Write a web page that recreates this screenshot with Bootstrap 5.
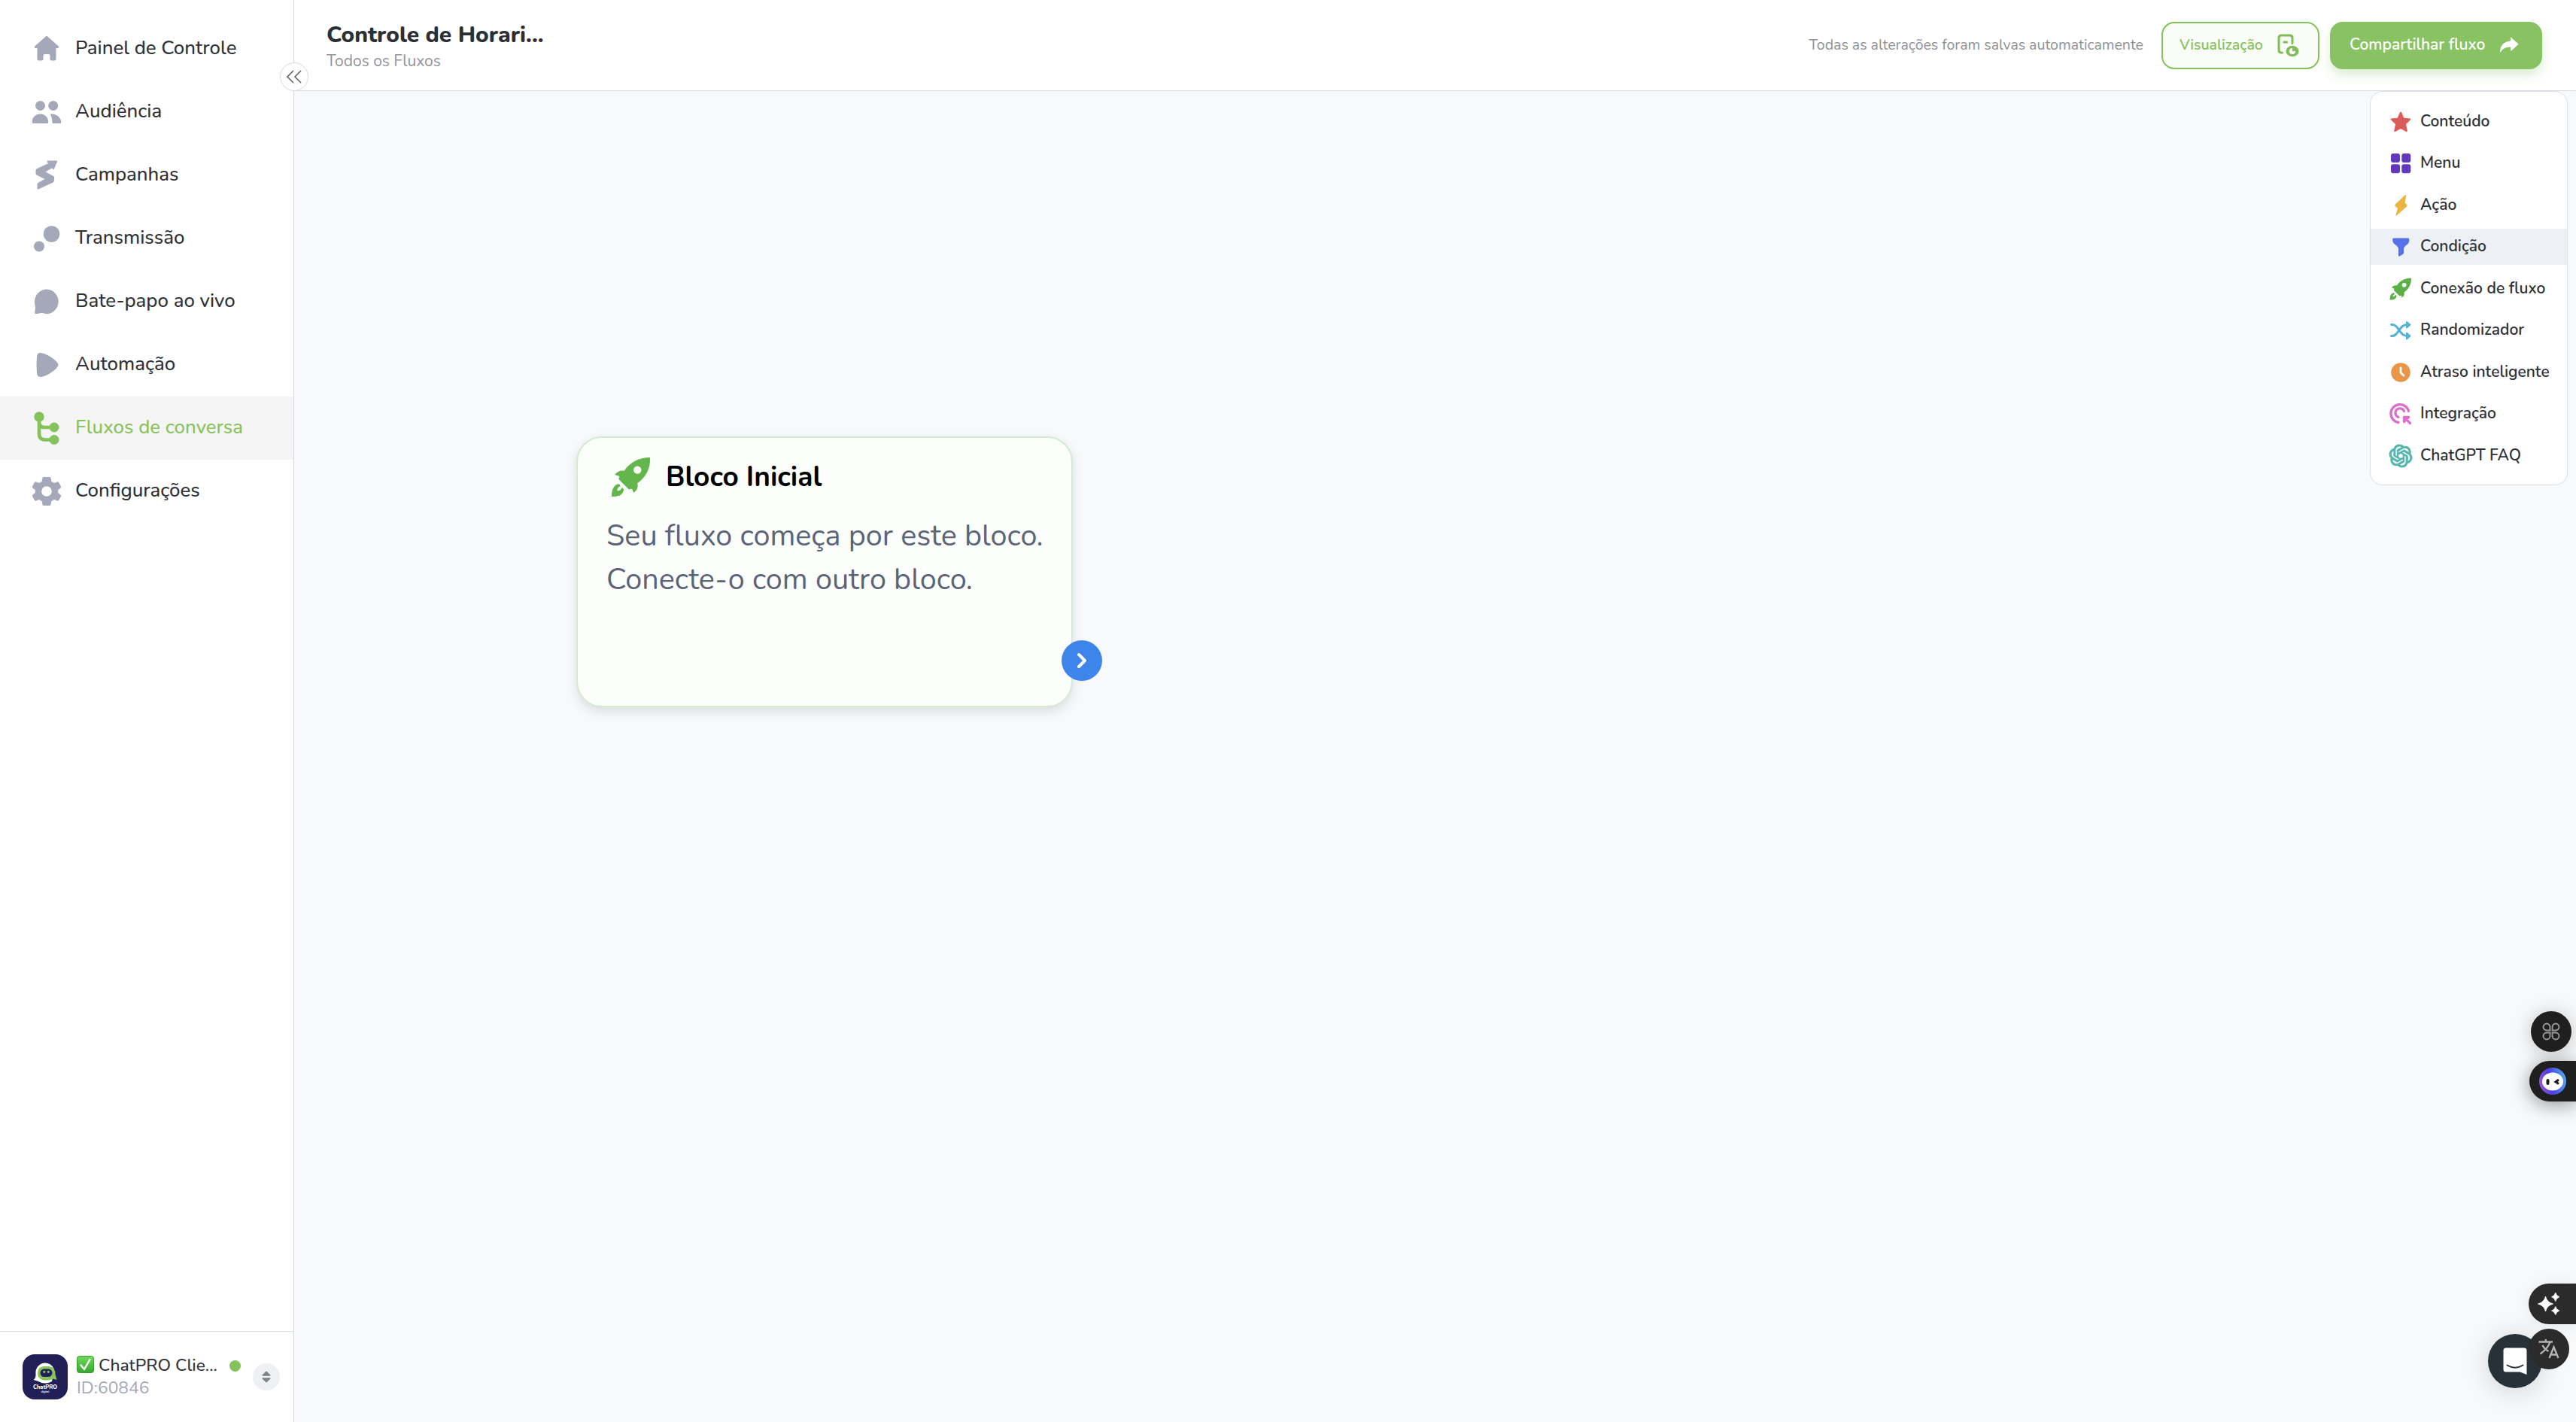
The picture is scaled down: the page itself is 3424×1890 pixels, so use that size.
<!DOCTYPE html>
<html lang="pt-BR">
<head>
<meta charset="utf-8">
<title>Controle de Horarios - Fluxos de conversa</title>
<link href="https://cdn.jsdelivr.net/npm/bootstrap@5.3.0/dist/css/bootstrap.min.css" rel="stylesheet">
<style>
  body { font-family: Nunito, "Noto Sans", sans-serif; color: #2b2f36; background: #fff; }
  .app-shell { width: 3424px; height: 1890px; overflow: hidden; }
  svg { display: block; flex: none; }

  /* sidebar */
  .side-bar { width: 391px; border-right: 1px solid #d7dae1; background: #fff; z-index: 2; }
  .side-menu { padding-top: 23px; }
  .side-link { height: 84px; padding: 0 0 2px 44px; gap: 20px; font-size: 25.8px; font-weight: 500; color: #2f3237; text-decoration: none; white-space: nowrap; }
  .side-link svg { width: 36px; height: 44px; fill: #a4a8b8; position: relative; top: 1px; }
  .side-link.active { background: #f5f5f5; color: #88c360; }
  .side-link.active svg { fill: #84c25b; }
  .collapse-btn { width: 38px; height: 38px; left: 372px; top: 83px; border: 1px solid #d9dade; background: #fff; z-index: 5; }
  .account-bar { height: 121px; border-top: 1px solid #d9dce3; padding: 0 17px 0 30px; }
  .account-logo { width: 60px; height: 60px; }
  .account-text { margin-left: 12px; width: 186px; }
  .account-name { font-size: 22.8px; font-weight: 500; line-height: 30px; white-space: nowrap; color: #2f3237; }
  .account-id { font-size: 22.8px; line-height: 30px; color: #a4a8b8; }
  .online-dot { width: 15px; height: 15px; background: #84c25b; margin-left: 17px; margin-top: -29px; }
  .switch-btn { width: 36px; height: 36px; background: #eef0f3; margin-left: 16px; }

  /* top bar */
  .top-bar { height: 121px; border-bottom: 1px solid #d9dce0; padding: 0 45px 0 43px; background: #fff; }
  .flow-title { font-size: 30px; font-weight: 800; line-height: 40px; color: #2b2f36; margin-top: 2px; white-space: nowrap; }
  .flow-sub { font-size: 21px; line-height: 28px; font-weight: 400; color: #929499; }
  .save-note { font-size: 19.5px; color: #8f9297; margin-right: 24px; white-space: nowrap; }
  .btn-flow { height: 63px; border-radius: 17px; padding: 0 22px; border-width: 2px; white-space: nowrap; }
  .btn-preview { width: 210px; color: #88c360; border-color: #84c25b; background: #f9fcf7; font-size: 19.5px; font-weight: 600; margin-right: 14px; padding-right: 24px; }
  .btn-share { width: 282px; color: #fff; background: #88c263; border-color: #88c263; font-size: 21px; font-weight: 600; padding: 0 24px; box-shadow: 0 8px 14px rgba(136,194,99,.28); }

  /* canvas */
  .flow-canvas { background: #f7f9fb; }
  .block-palette { width: 263px; height: 524px; left: 2759px; top: 0; border: 1px solid #dadfe3; border-radius: 17px; background: #fff; padding-top: 15.5px; gap: 7.5px; }
  .palette-item { height: 48px; padding: 0 0 0 25px; gap: 11px; font-size: 21px; font-weight: 600; color: #2f3237; white-space: nowrap; }
  .palette-item svg { width: 30px; height: 30px; }
  .palette-item.active { background: #edf1f5; }
  .start-node { width: 660px; height: 360px; left: 375px; top: 459px; border: 2px solid #d6e9d3; border-radius: 34px; background: #fcfefb; padding: 24px 38px; box-shadow: 0 6px 14px rgba(60,70,80,.14); }
  .node-title { font-size: 37px; font-weight: 700; color: #000; line-height: 56px; }
  .node-text { font-size: 39.6px; line-height: 58px; color: #5d6478; white-space: nowrap; margin-top: 21px; }
  .node-port { width: 54px; height: 54px; left: 643px; top: 269px; background: #3d85ea; }

  /* floating helpers */
  .helper { color: #fff; background: #1f1f20; }
  .h-round { width: 54px; height: 54px; }
  .h-pill { height: 54px; border-radius: 27px 0 0 27px; }
  .h-shortcut { left: 3364px; top: 1344px; box-shadow: 0 2px 26px rgba(0,0,0,.22); }
  .h-bot { left: 3362px; top: 1410px; width: 62px; padding-left: 13px; box-shadow: 0 4px 26px rgba(0,0,0,.42); }
  .h-spark { left: 3361px; top: 1706px; width: 63px; background: #2b2b2b; padding-left: 12px; box-shadow: 0 2px 22px rgba(0,0,0,.08); }
  .h-chat { left: 3307px; top: 1773px; width: 72px; height: 72px; background: #283038; box-shadow: 0 4px 36px rgba(0,0,0,.16); }
  .h-translate { left: 3361px; top: 1766px; background: #2b2b2b; }
</style>
</head>
<body>
<svg width="0" height="0" class="position-absolute">
  <symbol id="rocket" viewBox="0 0 52 52">
    <path fill-rule="evenodd" d="M50 1C36 1 25 7 17 18C12 17 8 19 5 23L11 25L10 29L23 42L27 41L29 46C34 43 35 39 34 34C45 26 51 15 50 1ZM34 12a5 5 0 1 1 0 10a5 5 0 0 1 0-10Z"/>
    <path d="M9 35C3 37 1 43 1 51C9 51 14 50 16 44C17 42 16 40 14 40C12 44 9 44 8 43C8 40 10 39 12 38C12 36 11 35 9 35Z"/>
  </symbol>
</svg>

<div class="app-shell d-flex position-relative">
  <aside class="side-bar d-flex flex-column flex-shrink-0">
    <nav class="side-menu d-flex flex-column flex-grow-1">
      <a class="side-link d-flex align-items-center"><svg viewBox="0 0 36 44"><path d="M16.2 5.9Q18 4.300 19.800 5.900L33.800 18.600Q35 20.500 33 20.900H30.500V35.500Q30.500 37.500 28.500 37.500H24.500Q22.500 37.500 22.500 35.500V31Q22.500 29 20.500 29H15.500Q13.500 29 13.500 31V35.500Q13.500 37.500 11.500 37.500H7.500Q5.500 37.500 5.500 35.500V20.900H3Q1 20.500 2.200 18.600Z"/></svg><span>Painel de Controle</span></a>
      <a class="side-link d-flex align-items-center"><svg viewBox="0 0 40 44" style="width:40px;margin:0 -2px"><circle cx="11.500" cy="13.500" r="6.500"/><circle cx="28.700" cy="13.500" r="6.500"/><path d="M.8 35.500C.8 28.500 5.500 24.500 11.500 24.500S22.200 28.500 22.200 35.500Q22.200 37 20.500 37H2.500Q.8 37 .8 35.500ZM24.800 24.500C33 23.500 39.300 29 39.300 35.500Q39.300 37 37.500 37H29Q27.500 37 27.400 35.500C27.300 31 26.500 28 24.800 24.500Z"/></svg><span>Audiência</span></a>
      <a class="side-link d-flex align-items-center"><svg viewBox="0 0 36 44"><path d="M19 2.500H31Q32.500 2.500 32 4L27.500 14.500L25 12.500L19.500 15.500L16.500 17.500L27 23Q28 23.700 28 25V28.500Q28 30.500 26.500 31.500L7 40.500Q5.500 40.800 5.500 39.500V34Q5.500 32.500 7 31.700L15.500 27L5 21.700Q3.500 21 3.500 19.500V15.500Q3.500 14 5 13.300L20.500 6L18.500 4.500Z"/></svg><span>Campanhas</span></a>
      <a class="side-link d-flex align-items-center"><svg viewBox="0 0 36 44"><circle cx="24.500" cy="16" r="10.800"/><circle cx="8" cy="32.500" r="7"/></svg><span>Transmissão</span></a>
      <a class="side-link d-flex align-items-center"><svg viewBox="0 0 36 44"><path d="M18.500 5.500A16.400 16.400 0 0 1 18.500 38.200Q15 38.200 12 36.800Q9 37.800 4 38.200Q2 38.200 2.200 36Q2.800 33 3 29.500Q2 26 2 22A16.400 16.400 0 0 1 18.500 5.500Z"/></svg><span>Bate-papo ao vivo</span></a>
      <a class="side-link d-flex align-items-center"><svg viewBox="0 0 36 44"><path d="M5 11Q5.500 5.500 10.500 6Q15 6.500 22 10.500Q33 17.500 33.600 22Q33 26.500 22 33.500Q15 37.500 10.500 38Q5.500 38.500 5 33Q4 22 5 11Z"/></svg><span>Automação</span></a>
      <a class="side-link active d-flex align-items-center"><svg viewBox="0 0 36 44"><circle cx="8" cy="7" r="6.700"/><circle cx="28" cy="21" r="6.500"/><circle cx="28" cy="37.500" r="6.500"/><path d="M8 8V29Q8 37.500 16 37.500H28M8 15Q9 21 15 21H28" fill="none" stroke="#84c25b" stroke-width="4.600"/></svg><span>Fluxos de conversa</span></a>
      <a class="side-link d-flex align-items-center"><svg viewBox="0 0 36 36" style="width:38px;height:40px;margin:0 -1px"><path fill-rule="evenodd" d="M14 0H22Q23 0 23.300 1.500L24 5.600L27.500 7.600L31.300 6.100Q32.600 5.700 33.300 6.800L36 11.800Q36.500 13 35.600 13.800L32.400 16.400V20L35.600 22.600Q36.500 23.400 36 24.500L33.200 29.300Q32.500 30.300 31.300 29.900L27.500 28.500L24 30.500L23.300 34.500Q23 36 22 36H14Q13 36 12.700 34.500L12 30.500L8.500 28.500L4.700 29.900Q3.500 30.300 2.800 29.300L0 24.500Q-.5 23.400 .4 22.600L3.600 20V16.400L.4 13.800Q-.5 13 0 11.800L2.700 6.800Q3.400 5.700 4.700 6.100L8.500 7.600L12 5.600L12.700 1.500Q13 0 14 0ZM18 11.500A6.500 6.500 0 1 0 18 24.500A6.500 6.500 0 0 0 18 11.500Z"/></svg><span>Configurações</span></a>
    </nav>
    <div class="account-bar d-flex align-items-center">
      <svg class="account-logo" viewBox="0 0 60 60"><rect width="60" height="60" rx="16" fill="#221f57"/><path d="M29 11.500A13 13 0 0 1 42 20L39 36Q30 41 21 36Q18 35 14.500 34Q18 31 17.500 26A13 13 0 0 1 29 11.500Z" fill="#fff"/><path d="M28 16H35Q44 17 43.500 27L45.500 34L40 32.500Q37 35 33 34.500H28Q20 33 20 25T28 16Z" fill="#89c35c"/><rect x="23.500" y="19.500" width="16" height="10.500" rx="5.200" fill="#221f57"/><circle cx="28.800" cy="23.300" r="1.600" fill="#89c35c"/><circle cx="34.300" cy="23.300" r="1.600" fill="#89c35c"/><text x="14" y="45.500" font-size="8.400" font-weight="800" fill="#fff" textLength="32" lengthAdjust="spacingAndGlyphs">ChatPRO</text><text x="24.500" y="51" font-size="4.200" font-weight="700" fill="#dcdcea" textLength="11">digital</text></svg>
      <div class="account-text">
        <div class="account-name d-flex align-items-center"><svg width="23" height="23" viewBox="0 0 23 23" style="margin:-4px 6px 0 0"><defs><linearGradient id="chk" x2="0" y2="1"><stop stop-color="#6fdc5c"/><stop offset="1" stop-color="#35a52e"/></linearGradient></defs><rect x=".5" y=".5" width="22" height="22" rx="3" fill="url(#chk)" stroke="#3f9c35"/><path d="M5.500 12.500L10 18L17.500 5" fill="none" stroke="#fff" stroke-width="2.400" stroke-linecap="round" stroke-linejoin="round"/></svg><span>ChatPRO Clie...</span></div>
        <div class="account-id">ID:60846</div>
      </div>
      <span class="online-dot rounded-circle flex-shrink-0"></span>
      <span class="switch-btn rounded-circle d-flex align-items-center justify-content-center flex-shrink-0"><svg width="12" height="16" viewBox="0 0 12 16" fill="#7f8388"><path d="M6 .3L11.500 5.500Q11.800 6.700 10.500 6.700H1.500Q.2 6.700 .5 5.500ZM6 15.700L.5 10.500Q.2 9.300 1.500 9.300H10.500Q11.800 9.300 11.500 10.500Z"/></svg></span>
    </div>
  </aside>

  <button class="collapse-btn rounded-circle position-absolute p-0 d-flex align-items-center justify-content-center"><svg width="20" height="18" viewBox="0 0 20 18" fill="none" stroke="#66686c" stroke-width="1.700"><path d="M9 1L1 9L9 17M19 1L11 9L19 17"/></svg></button>

  <div class="d-flex flex-column flex-grow-1">
    <header class="top-bar d-flex align-items-center">
      <div class="me-auto">
        <div class="flow-title">Controle de Horari...</div>
        <div class="flow-sub">Todos os Fluxos</div>
      </div>
      <span class="save-note">Todas as alterações foram salvas automaticamente</span>
      <button class="btn btn-flow btn-preview d-flex align-items-center justify-content-between"><span>Visualização</span><svg width="32" height="32" viewBox="0 0 32 32" fill="none" stroke="#7fbd57" stroke-width="3" stroke-linecap="round"><path d="M8.500 26H7.500Q4 26 4 22.500V6.500Q4 3 7.500 3H18.500Q22 3 22 6.500V13.500M11 12H14.500"/><ellipse cx="22" cy="24" rx="8.600" ry="7.200" fill="#7fbd57" stroke="none"/><circle cx="22" cy="24" r="4.100" fill="#f9fcf7" stroke="none"/><path d="M22 19.500V24H26.500A4.500 4.500 0 0 0 22 19.500Z" fill="#7fbd57" stroke="none"/></svg></button>
      <button class="btn btn-flow btn-share d-flex align-items-center"><span>Compartilhar fluxo</span><svg width="26" height="22" viewBox="0 0 26 22" fill="#fff" style="margin-left:19px"><path d="M15 1Q15 .2 16 .9L25 9Q25.500 9.700 25 10.300L16 18.500Q15 19 15 18V13.500C9 13.500 4.500 15.500 2 20Q1 21 1 19.500C1.500 11 6.500 6 15 5.500Z"/></svg></button>
    </header>

    <main class="flow-canvas flex-grow-1 position-relative">
      <section class="start-node position-absolute">
        <div class="node-title d-flex align-items-center"><svg width="54" height="54" fill="#62b64b" style="margin:0 19px 0 6px"><use href="#rocket"/></svg><span>Bloco Inicial</span></div>
        <div class="node-text">Seu fluxo começa por este bloco.<br>Conecte-o com outro bloco.</div>
        <span class="node-port rounded-circle position-absolute d-flex align-items-center justify-content-center"><svg width="16" height="22" viewBox="0 0 16 22" fill="none" stroke="#fff" stroke-width="4" stroke-linecap="round" stroke-linejoin="round"><path d="M4 3L12 11L4 19"/></svg></span>
      </section>

      <div class="block-palette position-absolute d-flex flex-column">
        <div class="palette-item d-flex align-items-center"><svg viewBox="0 0 30 30" fill="#dd5b5b"><path d="M14 2.200Q15 .6 16 2.200L19.300 9.700L27.600 10.500Q29.200 11 28 12.300L22 18L23.800 26.800Q23.800 28.500 22.200 27.900L15 24L7.800 27.900Q6.200 28.500 6.200 26.800L8 18L2 12.300Q.8 11 2.400 10.500L10.700 9.700Z"/></svg><span>Conteúdo</span></div>
        <div class="palette-item d-flex align-items-center"><svg viewBox="0 0 30 30" fill="#6039bd"><rect x="2" y="2" width="12" height="12" rx="3"/><rect x="16.300" y="2" width="12" height="12" rx="3"/><rect x="2" y="16.300" width="12" height="12" rx="3"/><rect x="16.300" y="16.300" width="12" height="12" rx="3"/></svg><span>Menu</span></div>
        <div class="palette-item d-flex align-items-center"><svg viewBox="0 0 30 30" fill="#eab541"><path d="M20.500 1.500Q22.500 .5 22.300 2.500L20.500 11.500L23 14Q24 15 23 16.500L10 28Q8.300 29.500 8.500 27.500L11 19L8 16.500Q6.500 15.500 7.800 13.500Z"/></svg><span>Ação</span></div>
        <div class="palette-item active d-flex align-items-center"><svg viewBox="0 0 30 30" fill="#5870ea"><path d="M5 3.500H25Q26.300 3.500 26.300 5V7.500Q26 10 23.500 12Q19 15 19 18V23.500Q18.500 25 13.500 27.500Q12 28 12 26.500V18Q12 15 7.500 12Q4.500 10 4.300 7.500V5Q4.300 3.500 5 3.500Z"/></svg><span>Condição</span></div>
        <div class="palette-item d-flex align-items-center"><svg fill="#5bb146"><use href="#rocket"/></svg><span>Conexão de fluxo</span></div>
        <div class="palette-item d-flex align-items-center"><svg viewBox="0 0 30 30" fill="none" stroke="#55b3d3" stroke-width="3" stroke-linecap="round" stroke-linejoin="round"><path d="M2.500 7.500C12 6 13 23 24 22.500M2.500 22.500C12 24 13 6.500 24 7.500"/><path fill="#55b3d3" stroke-width="2" d="M23 4L27.500 7.500L23 11.500ZM23 18.500L27.500 22.500L23 26.500Z"/></svg><span>Randomizador</span></div>
        <div class="palette-item d-flex align-items-center"><svg viewBox="0 0 30 30"><circle cx="15" cy="15" r="12.800" fill="#e89648"/><path d="M15 9V15.500L19 19" fill="none" stroke="#fff" stroke-width="2.800" stroke-linecap="round" stroke-linejoin="round"/></svg><span>Atraso inteligente</span></div>
        <div class="palette-item d-flex align-items-center"><svg viewBox="0 0 30 30" fill="none" stroke="#db70cc" stroke-width="3.300" stroke-linecap="round"><path d="M12 26.500A12 12 0 1 1 25.500 11.500M12 19.500A6 6 0 1 1 19.500 11.500"/><path d="M20 20L27.500 27.500M19.500 25.500V19.500H25.500Z" fill="#db70cc" stroke-linejoin="round"/></svg><span>Integração</span></div>
        <div class="palette-item d-flex align-items-center"><svg viewBox="0 0 24 24" fill="#56b5ae" stroke="#56b5ae" stroke-width=".9" overflow="visible"><path d="M22.2819 9.8211a5.9847 5.9847 0 0 0-.5157-4.9108 6.0462 6.0462 0 0 0-6.5098-2.9A6.0651 6.0651 0 0 0 4.9807 4.1818a5.9847 5.9847 0 0 0-3.9977 2.9 6.0462 6.0462 0 0 0 .7427 7.0966 5.98 5.98 0 0 0 .511 4.9107 6.051 6.051 0 0 0 6.5146 2.9001A5.9847 5.9847 0 0 0 13.2599 24a6.0557 6.0557 0 0 0 5.7718-4.2058 5.9894 5.9894 0 0 0 3.9977-2.9001 6.0557 6.0557 0 0 0-.7475-7.0729zm-9.022 12.6081a4.4755 4.4755 0 0 1-2.8764-1.0408l.1419-.0804 4.7783-2.7582a.7948.7948 0 0 0 .3927-.6813v-6.7369l2.02 1.1686a.071.071 0 0 1 .038.052v5.5826a4.504 4.504 0 0 1-4.4945 4.4944zm-9.6607-4.1254a4.4708 4.4708 0 0 1-.5346-3.0137l.142.0852 4.783 2.7582a.7712.7712 0 0 0 .7806 0l5.8428-3.3685v2.3324a.0804.0804 0 0 1-.0332.0615L9.74 19.9502a4.4992 4.4992 0 0 1-6.1408-1.6464zM2.3408 7.8956a4.485 4.485 0 0 1 2.3655-1.9728V11.6a.7664.7664 0 0 0 .3879.6765l5.8144 3.3543-2.0201 1.1685a.0757.0757 0 0 1-.071 0l-4.8303-2.7865A4.504 4.504 0 0 1 2.3408 7.872zm16.5963 3.8558L13.1038 8.364 15.1192 7.2a.0757.0757 0 0 1 .071 0l4.8303 2.7913a4.4944 4.4944 0 0 1-.6765 8.1042v-5.6772a.79.79 0 0 0-.407-.667zm2.0107-3.0231l-.142-.0852-4.7735-2.7818a.7759.7759 0 0 0-.7854 0L9.409 9.2297V6.8974a.0662.0662 0 0 1 .0284-.0615l4.8303-2.7866a4.4992 4.4992 0 0 1 6.6802 4.66zM8.3065 12.863l-2.02-1.1638a.0804.0804 0 0 1-.038-.0567V6.0742a4.4992 4.4992 0 0 1 7.3757-3.4537l-.142.0805L8.704 5.459a.7948.7948 0 0 0-.3927.6813zm1.0976-2.3654l2.602-1.4998 2.6069 1.4998v2.9994l-2.5974 1.4997-2.6067-1.4997Z"/></svg><span>ChatGPT FAQ</span></div>
      </div>
    </main>
  </div>

  <div class="helper h-round h-shortcut rounded-circle position-absolute d-flex align-items-center justify-content-center"><svg width="24" height="24" viewBox="0 0 24 24" fill="none" stroke="#99999b" stroke-width="1.900"><path d="M10.500 10.500H6A4.500 4.500 0 1 1 10.500 6ZM13.500 10.500H18A4.500 4.500 0 1 0 13.500 6ZM10.500 13.500H6A4.500 4.500 0 1 0 10.500 18ZM13.500 13.500H18A4.500 4.500 0 1 1 13.500 18Z"/></svg></div>
  <div class="helper h-pill h-bot position-absolute d-flex align-items-center"><svg width="36" height="36" viewBox="0 0 36 36"><defs><linearGradient id="orb" x1="0" y1=".7" x2="1" y2=".5"><stop stop-color="#9a58d8"/><stop offset=".45" stop-color="#4a3fe4"/><stop offset="1" stop-color="#52a5ee"/></linearGradient></defs><circle cx="18" cy="18" r="18" fill="url(#orb)"/><ellipse cx="18" cy="18.500" rx="14" ry="12" fill="#fff"/><rect x="9.500" y="15" width="4" height="8" rx="2" fill="#1b1b1e"/><path d="M26 16L22 19L26 21.500" fill="none" stroke="#1b1b1e" stroke-width="3"/></svg></div>
  <div class="helper h-pill h-spark position-absolute d-flex align-items-center"><svg width="30" height="32" viewBox="0 0 30 32" fill="#fff"><path d="M10.500 6Q12.500 14 20.500 16Q12.500 18 10.500 26Q8.500 18 .5 16Q8.500 14 10.500 6ZM23.800 1Q25 5.500 29 6.700Q25 8 23.800 12.500Q22.500 8 18.500 6.700Q22.500 5.500 23.800 1ZM23.800 19.500Q25 24 29 25Q25 26.300 23.800 30.500Q22.500 26.300 18.500 25Q22.500 24 23.800 19.500Z" stroke="#fff" stroke-width=".8"/></svg></div>
  <div class="helper h-chat rounded-circle position-absolute d-flex align-items-center justify-content-center"><svg width="34" height="38" viewBox="0 0 34 38"><path d="M5 1.500H29Q32.500 1.500 32.500 5V37L23.500 33.500H5Q1.500 33.500 1.500 30V5Q1.500 1.500 5 1.500Z" fill="#fff"/><path d="M6.500 24.500Q17 31 27.500 24.500" fill="none" stroke="#283038" stroke-width="2" stroke-linecap="round"/></svg></div>
  <div class="helper h-round h-translate rounded-circle position-absolute d-flex align-items-center justify-content-center"><svg width="30" height="28" viewBox="0 0 30 28" fill="none" stroke="#b4b4b4" stroke-width="2.400"><path d="M1.500 4.500H20M10.800 1V4.500M16.500 4.500Q14 13 3.500 20.500M6.500 9Q9 14 14.500 17M15.500 26L21.500 11.500L27.500 26M17.500 21.500H25.500"/></svg></div>
</div>
<script src="https://cdn.jsdelivr.net/npm/bootstrap@5.3.0/dist/js/bootstrap.bundle.min.js"></script>
</body>
</html>
